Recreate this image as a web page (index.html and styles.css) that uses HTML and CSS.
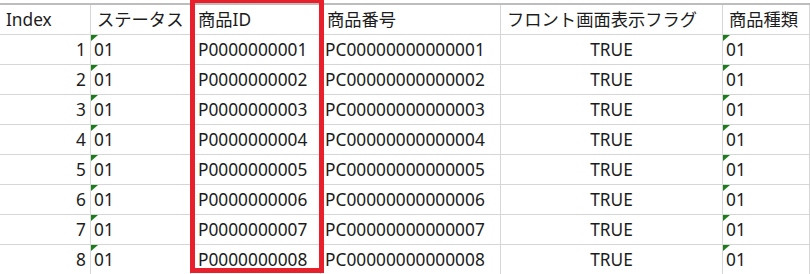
FILE: index.html
```html
<!DOCTYPE html>
<html lang="ja">
<head>
<meta charset="utf-8">
<title>商品一覧</title>
<link rel="stylesheet" href="styles.css">
</head>
<body>
<div class="sheet">
  <div class="grid">
    <div class="cell head">Index</div>
    <div class="cell head">ステータス</div>
    <div class="cell head c-id">商品ID</div>
    <div class="cell head">商品番号</div>
    <div class="cell head">フロント画面表示フラグ</div>
    <div class="cell head">商品種類</div>

    <div class="cell num">1</div><div class="cell txt">01</div><div class="cell c-id">P0000000001</div><div class="cell">PC00000000000001</div><div class="cell center">TRUE</div><div class="cell txt">01</div>
    <div class="cell num">2</div><div class="cell txt">01</div><div class="cell c-id">P0000000002</div><div class="cell">PC00000000000002</div><div class="cell center">TRUE</div><div class="cell txt">01</div>
    <div class="cell num">3</div><div class="cell txt">01</div><div class="cell c-id">P0000000003</div><div class="cell">PC00000000000003</div><div class="cell center">TRUE</div><div class="cell txt">01</div>
    <div class="cell num">4</div><div class="cell txt">01</div><div class="cell c-id">P0000000004</div><div class="cell">PC00000000000004</div><div class="cell center">TRUE</div><div class="cell txt">01</div>
    <div class="cell num">5</div><div class="cell txt">01</div><div class="cell c-id">P0000000005</div><div class="cell">PC00000000000005</div><div class="cell center">TRUE</div><div class="cell txt">01</div>
    <div class="cell num">6</div><div class="cell txt">01</div><div class="cell c-id">P0000000006</div><div class="cell">PC00000000000006</div><div class="cell center">TRUE</div><div class="cell txt">01</div>
    <div class="cell num">7</div><div class="cell txt">01</div><div class="cell c-id">P0000000007</div><div class="cell">PC00000000000007</div><div class="cell center">TRUE</div><div class="cell txt">01</div>
    <div class="cell num">8</div><div class="cell txt">01</div><div class="cell c-id">P0000000008</div><div class="cell">PC00000000000008</div><div class="cell center">TRUE</div><div class="cell txt">01</div>
  </div>
  <div class="highlight"></div>
</div>
</body>
</html>
```
FILE: styles.css
```css
html, body {
  margin: 0;
  padding: 0;
  background: #ffffff;
  overflow: hidden;
}

.sheet {
  position: relative;
  width: 810px;
  height: 274px;
  padding-top: 3px;
  box-sizing: border-box;
  font-family: "Noto Sans", "Noto Sans CJK JP", sans-serif;
  font-size: 17.3px;
  color: #1c1c1c;
}

.grid {
  display: grid;
  grid-template-columns: 91px 100px 130px 180px 222px 1fr;
  grid-auto-rows: 30px;
  border-top: 2px solid #bdbdbd;
}

.cell {
  position: relative;
  box-sizing: border-box;
  border-right: 1px solid #d6d6d6;
  border-bottom: 1px solid #d6d6d6;
  padding: 0 4px;
  display: flex;
  align-items: center;
  white-space: nowrap;
  overflow: hidden;
  line-height: 1;
}

.head {
  padding-left: 6px;
}

.c-id {
  padding-left: 7px;
}

.num {
  justify-content: flex-end;
  padding-right: 4px;
}

.center {
  justify-content: center;
}

.txt {
  padding-left: 3px;
}

.txt::before {
  content: "";
  position: absolute;
  left: 0;
  top: 0;
  width: 0;
  height: 0;
  border-top: 6px solid #1b7d1b;
  border-right: 7px solid transparent;
}

.highlight {
  position: absolute;
  left: 190px;
  top: -2px;
  width: 134px;
  height: 275px;
  box-sizing: border-box;
  border: 5px solid #e8202b;
  pointer-events: none;
}
```
